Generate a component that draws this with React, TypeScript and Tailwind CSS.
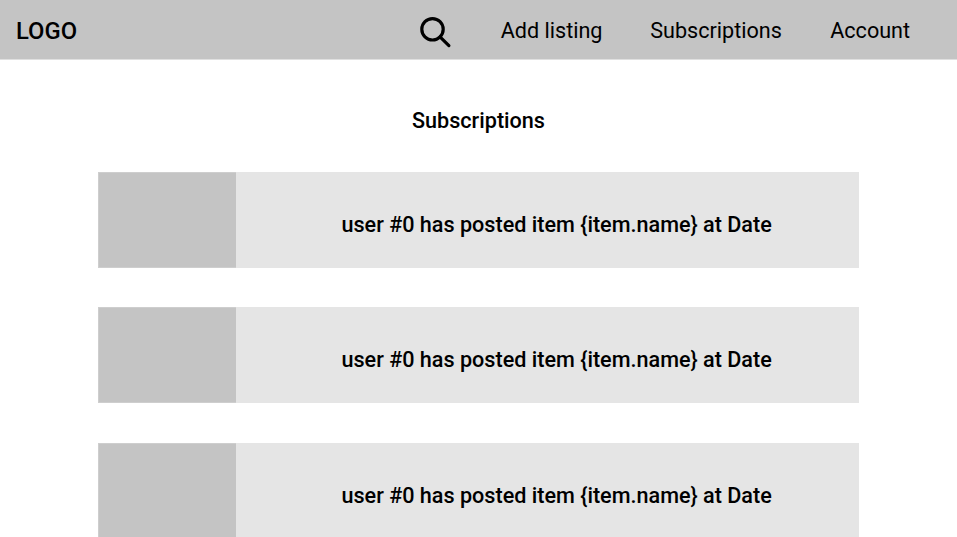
const rows = [
  { frame: "mt-[38px]", text: "pt-10" },
  { frame: "mt-[39px]", text: "pt-10" },
  { frame: "mt-10", text: "pt-10" },
];

function SearchIcon() {
  return (
    <svg className="h-8 w-8 shrink-0" viewBox="0 0 32 32" fill="none" stroke="black" strokeWidth="3.2" strokeLinecap="round">
      <circle cx="12.5" cy="12.3" r="10.7" />
      <path d="M20 19.8L28.9 28.6" />
    </svg>
  );
}

export default function App() {
  return (
    <div className="h-[537px] w-[957px] overflow-hidden bg-white font-['Roboto',sans-serif] text-[21.6px] leading-[26px] text-black">
      <header className="flex h-[60px] items-center border-b border-[#e0e0e0] bg-[#c4c4c4] pt-[3px] pl-4 whitespace-nowrap">
        <div className="w-[403.5px] text-[23.8px] font-medium">LOGO</div>
        <div className="w-[81.2px] pt-[3px]"><SearchIcon /></div>
        <nav className="flex">
          <a className="w-[149.5px]">Add listing</a>
          <a className="w-[180px]">Subscriptions</a>
          <a>Account</a>
        </nav>
      </header>
      <main className="px-[98px] pt-12">
        <h1 className="text-center font-medium">Subscriptions</h1>
        <div className="flex flex-col">
          {rows.map((row, i) => (
            <article key={i} className={`${row.frame} flex h-24 w-[761px] shrink-0 bg-[#e5e5e5]`}>
              <div className="w-[138px] border-t border-b border-l border-[#cecece] bg-[#c4c4c4]" />
              <p className={`${row.text} pl-[105.5px] font-medium whitespace-nowrap`}>{"user #0 has posted item {item.name} at Date"}</p>
            </article>
          ))}
        </div>
      </main>
    </div>
  );
}
